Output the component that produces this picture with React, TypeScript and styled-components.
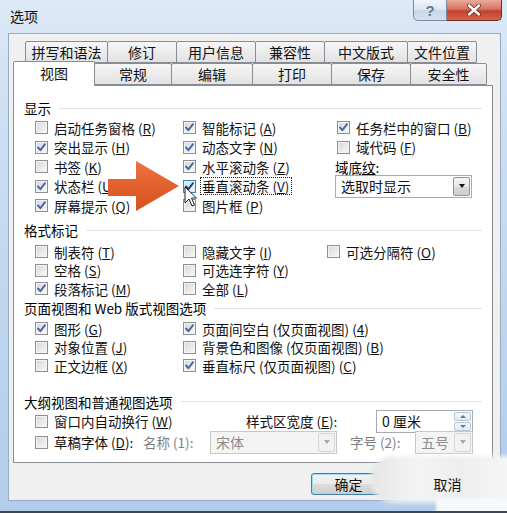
import React from 'react';
import styled, { createGlobalStyle } from 'styled-components';

const GlobalStyle = createGlobalStyle`
  html, body {
    margin: 0;
    padding: 0;
    background: #ffffff;
  }
  body {
    font-family: "Noto Sans CJK SC", "Noto Sans", sans-serif;
    color: #000;
  }
`;

const FONT = '"Noto Sans CJK SC", "Noto Sans", sans-serif';

function App() {
  return (
    <>
      <GlobalStyle />
      <Window>
        <TitleBar>
          <Title>选项</Title>
          <Controls>
            <HelpButton>?</HelpButton>
            <CloseButton>
              <svg width="16" height="12" viewBox="0 0 16 12">
                <path d="M3 1.5 L13 10.5 M13 1.5 L3 10.5" stroke="#6b2a24" strokeWidth="4" strokeLinecap="round" />
                <path d="M3 1.5 L13 10.5 M13 1.5 L3 10.5" stroke="#ffffff" strokeWidth="2.4" strokeLinecap="round" />
              </svg>
            </CloseButton>
          </Controls>
        </TitleBar>

        <Body>
          <TabStrip>
            <TabRow indent={12}>
              <Tab w={83}>拼写和语法</Tab>
              <Tab w={70}>修订</Tab>
              <Tab w={80}>用户信息</Tab>
              <Tab w={70}>兼容性</Tab>
              <Tab w={84}>中文版式</Tab>
              <Tab w={70}>文件位置</Tab>
            </TabRow>
            <TabRow indent={0}>
              <Tab w={82} active>视图</Tab>
              <Tab w={78}>常规</Tab>
              <Tab w={82}>编辑</Tab>
              <Tab w={80}>打印</Tab>
              <Tab w={80}>保存</Tab>
              <Tab w={77}>安全性</Tab>
            </TabRow>
          </TabStrip>

          <Panel>
            <SectionHead mt={0}>
              <span>显示</span>
              <Rule />
            </SectionHead>
            <Grid cols="148px 154px 1fr" rowH={19.5} mt={1}>
              <Check label="启动任务窗格" k="R" />
              <Check label="智能标记" k="A" checked />
              <Check label="任务栏中的窗口" k="B" checked />
              <Check label="突出显示" k="H" checked />
              <Check label="动态文字" k="N" checked />
              <Check label="域代码" k="F" />
              <Check label="书签" k="K" />
              <Check label="水平滚动条" k="Z" checked />
              <FieldLabel>
                域底<u>纹</u>:
              </FieldLabel>
              <Check label="状态栏" k="U" checked />
              <Check label="垂直滚动条" k="V" checked focused />
              <Item>
                <Combo w={137} shift={-2}>
                  <ComboText>选取时显示</ComboText>
                  <DropButton>
                    <DropArrow />
                  </DropButton>
                </Combo>
              </Item>
              <Check label="屏幕提示" k="Q" checked />
              <Check label="图片框" k="P" />
            </Grid>

            <SectionHead mt={5.5}>
              <span>格式标记</span>
              <Rule />
            </SectionHead>
            <Grid cols="148px 144px 1fr" rowH={18.5} mt={3.5}>
              <Check label="制表符" k="T" />
              <Check label="隐藏文字" k="I" />
              <Check label="可选分隔符" k="O" />
              <Check label="空格" k="S" />
              <Check label="可选连字符" k="Y" />
              <span />
              <Check label="段落标记" k="M" checked />
              <Check label="全部" k="L" />
            </Grid>

            <SectionHead mt={1}>
              <span>页面视图和 Web 版式视图选项</span>
              <Rule />
            </SectionHead>
            <Grid cols="148px 1fr" rowH={18.5} mt={2.5}>
              <Check label="图形" k="G" checked />
              <Check label="页面间空白 (仅页面视图)" k="4" checked />
              <Check label="对象位置" k="J" />
              <Check label="背景色和图像 (仅页面视图)" k="B" />
              <Check label="正文边框" k="X" />
              <Check label="垂直标尺 (仅页面视图)" k="C" checked />
            </Grid>

            <SectionHead mt={17.5}>
              <span>大纲视图和普通视图选项</span>
              <Rule />
            </SectionHead>
            <FormRow>
              <Cell w={211}>
                <Check label="窗口内自动换行" k="W" />
              </Cell>
              <Cell w={130}>
                样式区宽度 (<u>E</u>):
              </Cell>
              <Combo w={97} shift={0}>
                <ComboText>0 厘米</ComboText>
                <Spin>
                  <SpinHalf>
                    <SpinArrow up />
                  </SpinHalf>
                  <SpinHalf>
                    <SpinArrow />
                  </SpinHalf>
                </Spin>
              </Combo>
            </FormRow>
            <FormRow>
              <Cell w={108}>
                <Check label="草稿字体" k="D" colon />
              </Cell>
              <Cell w={67} muted>
                名称 (1):
              </Cell>
              <Combo w={127} shift={0} disabled>
                <ComboText muted>宋体</ComboText>
                <DropButton disabled>
                  <DropArrow disabled />
                </DropButton>
              </Combo>
              <Cell w={65} muted pad={13}>
                字号 (2):
              </Cell>
              <Combo w={58} shift={0} disabled>
                <ComboText muted>五号</ComboText>
                <DropButton disabled>
                  <DropArrow disabled />
                </DropButton>
              </Combo>
            </FormRow>
          </Panel>

          <ButtonRow>
            <PushButton primary>确定</PushButton>
            <PushButton ghost>取消</PushButton>
          </ButtonRow>
        </Body>

        <BigArrow width="72" height="51" viewBox="0 0 72 51">
          <defs>
            <linearGradient id="arrowFill" x1="0" y1="0" x2="0" y2="1">
              <stop offset="0" stopColor="#ee7444" />
              <stop offset="0.5" stopColor="#e2602c" />
              <stop offset="1" stopColor="#d5531f" />
            </linearGradient>
          </defs>
          <path d="M0 18 L28 18 L28 0 L71 25 L28 50 L28 35 L0 35 Z" fill="url(#arrowFill)" />
        </BigArrow>

        <Cursor width="14" height="22" viewBox="0 0 14 22">
          <path
            d="M1 1 L1 17 L5 13 L8 20 L10.5 19 L7.5 12 L12.5 12 Z"
            fill="#ffffff"
            stroke="#222"
            strokeWidth="1"
            strokeLinejoin="round"
          />
        </Cursor>

        <Smudge />
        <SmudgeTail />
      </Window>
    </>
  );
}

interface CheckProps {
  label: string;
  k: string;
  checked?: boolean;
  focused?: boolean;
  colon?: boolean;
}

function Check({ label, k, checked, focused, colon }: CheckProps) {
  return (
    <Item>
      <Box checked={checked} focused={focused}>
        {checked && (
          <svg width="11" height="11" viewBox="0 0 11 11">
            <path
              d="M2 5.5 L4.4 8.2 L9 2.2"
              fill="none"
              stroke={focused ? '#1f3c78' : '#4a64a4'}
              strokeWidth="1.9"
              strokeLinecap="round"
              strokeLinejoin="round"
            />
          </svg>
        )}
      </Box>
      <Label focused={focused}>
        {label} (<u>{k}</u>){colon ? ':' : ''}
      </Label>
    </Item>
  );
}

export default App;

const Window = styled.div`
  position: relative;
  width: 507px;
  height: 513px;
  overflow: hidden;
  display: flex;
  flex-direction: column;
  box-sizing: border-box;
  background: linear-gradient(180deg, #dde9f6 0%, #cfe0f3 20%, #bfd6ee 60%, #b2cdeb 100%);
  border-bottom: 2px solid #3d4653;
  font-family: ${FONT};
`;

const TitleBar = styled.div`
  display: flex;
  height: 33px;
  flex-shrink: 0;
  padding: 0 5px 0 10px;
`;

const Title = styled.div`
  font-size: 14px;
  line-height: 33px;
  color: #111;
`;

const Controls = styled.div`
  display: flex;
  margin-left: auto;
  height: 21px;
`;

const HelpButton = styled.div`
  width: 34px;
  height: 21px;
  box-sizing: border-box;
  display: flex;
  align-items: center;
  justify-content: center;
  border: 1px solid #7a8ca5;
  border-top: none;
  border-radius: 0 0 0 5px;
  background: linear-gradient(180deg, #f1f5fa 0%, #dbe5f1 50%, #c9d7e8 51%, #d5e1ef 100%);
  color: #6b7686;
  font-family: "Liberation Sans", sans-serif;
  font-size: 15px;
  font-weight: bold;
`;

const CloseButton = styled.div`
  width: 55px;
  height: 21px;
  box-sizing: border-box;
  display: flex;
  align-items: center;
  justify-content: center;
  border: 1px solid #6f2d27;
  border-top: none;
  border-left: none;
  border-radius: 0 0 5px 0;
  background: linear-gradient(180deg, #e9aa9c 0%, #d7735f 45%, #c2402c 55%, #d4654f 100%);
`;

const Body = styled.div`
  flex: 1;
  margin: 0 6px 10px 8px;
  box-sizing: border-box;
  border: 1px solid #97abc4;
  background: #f0f0f0;
  padding: 8px 7px 0 4px;
  display: flex;
  flex-direction: column;
`;

const TabStrip = styled.div`
  display: flex;
  flex-direction: column;
`;

const TabRow = styled.div<{ indent: number }>`
  display: flex;
  align-items: flex-end;
  height: 21px;
  padding-left: ${(p) => p.indent}px;

  & + & {
    height: 22px;
  }
`;

const Tab = styled.div<{ w: number; active?: boolean }>`
  width: ${(p) => p.w}px;
  height: ${(p) => (p.active ? 25 : 22)}px;
  margin-bottom: ${(p) => (p.active ? -1 : 0)}px;
  margin-right: -1px;
  box-sizing: border-box;
  border: 1px solid #898c95;
  border-bottom: ${(p) => (p.active ? 'none' : '1px solid #898c95')};
  border-radius: 2px 2px 0 0;
  background: ${(p) => (p.active ? '#ffffff' : 'linear-gradient(180deg, #f6f6f6 0%, #ececec 50%, #e2e2e2 100%)')};
  position: relative;
  z-index: ${(p) => (p.active ? 2 : 1)};
  display: flex;
  align-items: center;
  justify-content: center;
  font-size: 14px;
  line-height: 1;
  padding-bottom: ${(p) => (p.active ? 3 : 0)}px;
  color: #111;
`;

const Panel = styled.div`
  height: 378px;
  box-sizing: border-box;
  border: 1px solid #898c95;
  background: #ffffff;
  padding: 13px 10px 0 10px;
  display: flex;
  flex-direction: column;
`;

const SectionHead = styled.div<{ mt: number }>`
  display: flex;
  align-items: center;
  height: 18px;
  margin-top: ${(p) => p.mt}px;
  font-size: 13.5px;
  white-space: nowrap;
`;

const Rule = styled.div`
  flex: 1;
  height: 1px;
  margin-left: 8px;
  background: #dce2e8;
`;

const Grid = styled.div<{ cols: string; rowH: number; mt: number }>`
  display: grid;
  grid-template-columns: ${(p) => p.cols};
  grid-auto-rows: ${(p) => p.rowH}px;
  margin-top: ${(p) => p.mt}px;
  padding-left: 11px;
`;

const Item = styled.div`
  display: flex;
  align-items: center;
  gap: 5px;
  white-space: nowrap;
  font-size: 13.5px;
`;

const Box = styled.span<{ checked?: boolean; focused?: boolean }>`
  width: 13px;
  height: 13px;
  flex-shrink: 0;
  box-sizing: border-box;
  border: 1px solid ${(p) => (p.focused ? '#3c7fb1' : '#8e8f8f')};
  background: ${(p) =>
    p.focused
      ? 'linear-gradient(135deg, #cde6fa 0%, #eaf5fd 100%)'
      : 'linear-gradient(135deg, #d6d6d6 0%, #ececec 60%, #f8f8f8 100%)'};
  box-shadow: inset 0 0 0 1px ${(p) => (p.focused ? '#dff0fc' : '#f4f4f4')};
  display: flex;
  align-items: center;
  justify-content: center;
`;

const Label = styled.span<{ focused?: boolean }>`
  line-height: 16px;
  padding: 0 2px 0 1px;
  outline: ${(p) => (p.focused ? '1px dotted #222' : 'none')};
  outline-offset: 0;
  color: #111;
`;

const FieldLabel = styled.div`
  display: flex;
  align-items: center;
  margin-left: -2px;
  font-size: 13.5px;
  white-space: nowrap;
`;

const Combo = styled.div<{ w: number; shift: number; disabled?: boolean }>`
  width: ${(p) => p.w}px;
  height: 23px;
  margin-left: ${(p) => p.shift}px;
  box-sizing: border-box;
  border: 1px solid ${(p) => (p.disabled ? '#c5c9cf' : '#a6abb3')};
  background: ${(p) => (p.disabled ? '#f4f4f4' : '#ffffff')};
  display: flex;
  align-items: center;
  flex-shrink: 0;
`;

const ComboText = styled.span<{ muted?: boolean }>`
  flex: 1;
  padding-left: 5px;
  font-size: 14px;
  color: ${(p) => (p.muted ? '#8d8d8d' : '#111')};
  white-space: nowrap;
`;

const DropButton = styled.div<{ disabled?: boolean }>`
  width: 17px;
  height: 19px;
  margin-right: 1px;
  box-sizing: border-box;
  border: 1px solid ${(p) => (p.disabled ? '#d6d6d6' : '#8f9399')};
  border-radius: 2px;
  background: ${(p) =>
    p.disabled ? '#f2f2f2' : 'linear-gradient(180deg, #f4f4f4 0%, #e8e8e8 50%, #d9d9d9 51%, #cfcfcf 100%)'};
  display: flex;
  align-items: center;
  justify-content: center;
`;

const DropArrow = styled.span<{ disabled?: boolean }>`
  width: 0;
  height: 0;
  border-left: 3.5px solid transparent;
  border-right: 3.5px solid transparent;
  border-top: 4px solid ${(p) => (p.disabled ? '#a8a8a8' : '#111')};
`;

const Spin = styled.div`
  width: 17px;
  height: 19px;
  margin-right: 1px;
  display: flex;
  flex-direction: column;
  gap: 1px;
`;

const SpinHalf = styled.div`
  flex: 1;
  box-sizing: border-box;
  border: 1px solid #b7c4d3;
  border-radius: 2px;
  background: linear-gradient(180deg, #f5f8fb 0%, #e2e9f1 100%);
  display: flex;
  align-items: center;
  justify-content: center;
`;

const SpinArrow = styled.span<{ up?: boolean }>`
  width: 0;
  height: 0;
  border-left: 3px solid transparent;
  border-right: 3px solid transparent;
  ${(p) => (p.up ? 'border-bottom: 3px solid #5b7ba3;' : 'border-top: 3px solid #5b7ba3;')}
`;

const FormRow = styled.div`
  display: flex;
  align-items: center;
  height: 21px;
  padding-left: 11px;
  font-size: 13.5px;
  white-space: nowrap;
`;

const Cell = styled.div<{ w: number; muted?: boolean; pad?: number }>`
  width: ${(p) => p.w}px;
  margin-left: ${(p) => p.pad || 0}px;
  flex-shrink: 0;
  color: ${(p) => (p.muted ? '#7e7e7e' : '#111')};
`;

const ButtonRow = styled.div`
  display: flex;
  justify-content: flex-end;
  gap: 24px;
  margin-top: 10px;
  padding-right: 8px;
`;

const PushButton = styled.div<{ primary?: boolean; ghost?: boolean }>`
  width: 75px;
  height: 22px;
  box-sizing: border-box;
  display: flex;
  align-items: center;
  justify-content: center;
  font-size: 14px;
  color: #111;
  border-radius: 3px;
  border: 1px solid ${(p) => (p.ghost ? 'transparent' : p.primary ? '#3c7fb1' : '#707070')};
  background: ${(p) =>
    p.ghost ? 'transparent' : 'linear-gradient(180deg, #f2f2f2 0%, #ebebeb 50%, #dddddd 51%, #cfcfcf 100%)'};
  box-shadow: ${(p) => (p.primary ? 'inset 0 0 0 1px #9fdcf8' : 'none')};
  position: relative;
  z-index: ${(p) => (p.ghost ? 4 : 0)};
`;

const BigArrow = styled.svg`
  position: absolute;
  left: 108px;
  top: 161px;
  z-index: 3;
`;

const Cursor = styled.svg`
  position: absolute;
  left: 184px;
  top: 186px;
  z-index: 3;
`;

const Smudge = styled.div`
  position: absolute;
  left: 371px;
  top: 456px;
  width: 150px;
  height: 47px;
  border-radius: 22px 0 0 22px;
  background: linear-gradient(90deg, #e6e6e6 0%, #f3f3f3 30%, #eeeeee 60%, #f7f7f7 100%);
  filter: blur(2px);
  z-index: 3;
`;

const SmudgeTail = styled.div`
  position: absolute;
  left: 436px;
  top: 498px;
  width: 80px;
  height: 20px;
  background: #f6f8fb;
  filter: blur(1.5px);
  z-index: 3;
`;
